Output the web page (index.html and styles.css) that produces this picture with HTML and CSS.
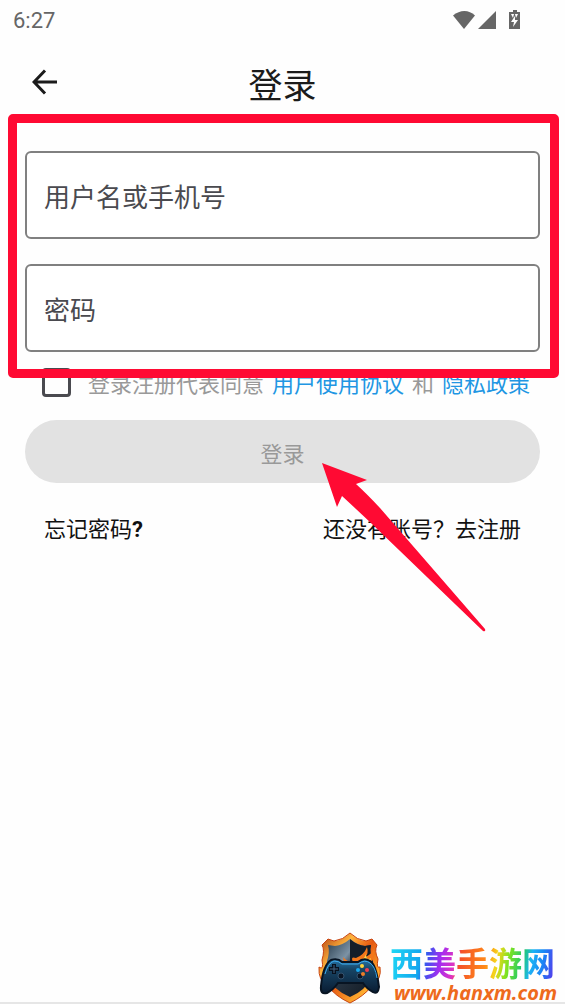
FILE: index.html
```html
<!DOCTYPE html>
<html lang="zh-CN">
  <head>
    <meta charset="UTF-8" />
    <meta name="viewport" content="width=device-width, initial-scale=1.0" />
    <title>登录</title>
    <link rel="stylesheet" href="styles.css">
  </head>
  <body>
    <div class="status-bar">
      <span class="time">6:27</span>
      <svg width="72" height="24" viewBox="0 -3 72 24" fill="#666">
        <path d="M0 4.500C7-1.500 16-1.500 22 4.500L11 18z" />
        <path d="M43 0v18H25z" />
        <path d="M57 1h3v-2h4v2h3v17H56V1z" />
        <path fill="#fff" d="M58 3h3l-1 4zM65 3h-3l1 4zM62 5l-4 6h3l-1 5 5-7h-3z" />
      </svg>
    </div>

    <header class="header">
      <button class="back" type="button" aria-label="返回">
        <svg width="26" height="26" viewBox="0 0 26 26" fill="none" stroke="#1b1b1b" stroke-width="3">
          <path d="M13 1.500L2 13l11 11.500M2 13h23" />
        </svg>
      </button>
      <h1>登录</h1>
    </header>

    <form class="login">
      <div class="fields">
        <input type="text" name="username" placeholder="用户名或手机号" aria-label="用户名或手机号" />
        <input type="password" name="password" placeholder="密码" aria-label="密码" />
      </div>

      <div class="agree">
        <input type="checkbox" id="agree" />
        <label for="agree">登录注册代表同意</label>
        <a href="#">用户使用协议</a>
        <span>和</span>
        <a href="#">隐私政策</a>
      </div>

      <button class="submit" type="submit" disabled>登录</button>

      <div class="links">
        <a href="#">忘记密码<b>?</b></a>
        <a href="#">还没有账号？去注册</a>
      </div>

      <!-- red marks over the form -->
      <div class="mark-box"></div>
      <svg class="mark-arrow" width="164" height="170" viewBox="0 0 164 170">
        <path fill="#ff0a33" d="M0 0L45 17L34 21Q45 31 58 45L163 166Q164 169 161 168L50 61Q33 45 20 33L15 44z" />
      </svg>
    </form>

    <footer class="watermark">
      <svg width="64" height="72" viewBox="0 0 64 72">
        <defs>
          <linearGradient id="rim" x1="0" y1="0" x2="1" y2="1">
            <stop offset="0" stop-color="#a83510" />
            <stop offset=".3" stop-color="#ffb43c" />
            <stop offset=".5" stop-color="#e65a12" />
            <stop offset=".8" stop-color="#ffb030" />
            <stop offset="1" stop-color="#d93a12" />
          </linearGradient>
          <linearGradient id="steel" x1="0" y1="0" x2="1" y2="1">
            <stop offset="0" stop-color="#263b4c" />
            <stop offset=".35" stop-color="#7d93a5" />
            <stop offset=".5" stop-color="#26323f" />
            <stop offset="1" stop-color="#111922" />
          </linearGradient>
          <linearGradient id="pad" x1="0" y1="0" x2="0" y2="1">
            <stop offset="0" stop-color="#2876a8" />
            <stop offset=".3" stop-color="#174464" />
            <stop offset="1" stop-color="#091b31" />
          </linearGradient>
        </defs>
        <path fill="url(#rim)" stroke="#c8430f" stroke-width="1" d="M32 1Q39 8 48 9L54 7L59 13Q56 19 60 27Q58 37 62 35Q64 47 54 54Q46 64 32 71Q17 64 10 54Q0 49 1 35Q6 39 4 28Q7 18 4 13L10 7L16 9Q25 8 32 1z" />
        <path fill="url(#steel)" d="M32 7Q39 13 47 14L53 13Q51 20 55 29V44Q47 59 32 65Q15 58 9 44V29Q12 20 10 13L17 14Q25 13 32 7z" />
        <path fill="#151e29" d="M32 7Q39 13 47 14L53 13Q51 20 55 29H32z" />
        <path fill="#f4771a" d="M20 34Q20 27 26 30L25 25Q30 31 35 30Q32 24 38 26Q46 23 49 15Q51 22 47 25Q53 23 56 17Q57 26 53 31L56 39H20z" />
        <path fill="#ffd34a" d="M36 32Q46 29 48 22Q48 29 53 26Q51 34 46 38H36z" />
        <path fill="url(#pad)" stroke="#081422" stroke-width="2" d="M13 28Q20 26 24 30H40Q46 25 52 29Q58 32 61 55Q60 63 55 60Q49 57 45 51H20Q15 58 9 61Q2 63 3 54Q5 33 13 28z" />
        <path fill="none" stroke="#3cadf0" stroke-width="1" d="M7 42Q10 31 16 29Q21 29 24 32H40Q47 27 52 31Q57 34 59 46" />
        <path stroke="#07111e" stroke-width="4" d="M16 32v10M11 37h10" />
        <path stroke="#466581" stroke-width="1" d="M16 33v8M12 37h8" />
        <g fill="#0a1524" stroke="#35536f">
          <circle cx="23" cy="44" r="3" />
          <circle cx="42" cy="44" r="3" />
        </g>
        <circle cx="40" cy="38" r="2" fill="#19a8ef" />
        <circle cx="44" cy="34" r="2" fill="#ffd23b" />
        <circle cx="49" cy="38" r="2" fill="#f13d4f" />
        <circle cx="45" cy="42" r="2" fill="#ed7d28" />
      </svg>
      <div class="site">
        <p class="site-name">西美手游网</p>
        <p class="site-url">www.hanxm.com</p>
      </div>
    </footer>
  </body>
</html>
```
FILE: styles.css
```css
* {
  margin: 0;
  padding: 0;
  box-sizing: border-box;
  font-family: "Noto Sans CJK SC", sans-serif;
}

body {
  min-height: 100vh;
  display: flex;
  flex-direction: column;
  background: #fefefe;
  box-shadow: inset 0 -2px #e6e6e6;
}
a {
  color: #2196e3;
  text-decoration: none;
}

.status-bar {
  display: flex;
  align-items: center;
  justify-content: space-between;
  height: 40px;
  padding: 0 40px 0 13px;
}
.time {
  font-family: Roboto, sans-serif;
  font-size: 22px;
  color: #666;
}

.header {
  display: grid;
  grid-template-columns: 58px 1fr 58px;
  align-items: center;
  height: 84px;
}
.header h1 {
  padding-top: 4px;
  font-size: 34px;
  font-weight: 400;
  line-height: 48px;
  text-align: center;
  color: #1b1b1b;
}
.back {
  display: flex;
  justify-content: flex-end;
  border: 0;
  background: none;
  cursor: pointer;
}

.login {
  position: relative;
  padding: 27px 25px 0;
}
.fields {
  display: flex;
  flex-direction: column;
  gap: 25px;
}
.fields input {
  width: 100%;
  height: 88px;
  padding: 0 17px;
  border: 2px solid #808080;
  border-radius: 6px;
  outline: 0;
  background: #fff;
  color: #222;
  font-size: 26px;
}
.fields input::placeholder {
  color: #4a4a4f;
}

.agree {
  display: flex;
  align-items: center;
  gap: 8px;
  height: 32px;
  margin-top: 14px;
  padding-left: 17px;
  font-size: 22px;
  white-space: nowrap;
  color: #999;
}
.agree input {
  appearance: none;
  flex: none;
  width: 29px;
  height: 29px;
  margin-right: 9px;
  border: 3px solid #4a4a4f;
  border-radius: 4px;
}

.submit {
  display: block;
  width: 100%;
  height: 63px;
  margin-top: 22px;
  border: 0;
  border-radius: 32px;
  background: #e2e2e2;
  color: #999;
  font-size: 22px;
}

.links {
  display: flex;
  justify-content: space-between;
  margin-top: 28px;
  padding: 0 19px;
  font-size: 22px;
  line-height: 32px;
}
.links a {
  color: #111;
}
.links b {
  font-family: Roboto, sans-serif;
}

.mark-box {
  position: absolute;
  top: -10px;
  left: 8px;
  right: 6px;
  height: 264px;
  border: 9px solid #ff0a33;
  border-radius: 5px;
  pointer-events: none;
}
.mark-arrow {
  position: absolute;
  top: 339px;
  left: 57%;
  pointer-events: none;
}

/* site mark in the bottom corner */
.watermark {
  display: flex;
  justify-content: flex-end;
  gap: 8px;
  height: 72px;
  margin-top: auto;
  padding-right: 8px;
}
.site-name {
  margin-top: 10px;
  font-size: 33px;
  font-weight: 700;
  line-height: 40px;
  background: linear-gradient(100deg, #1fdcf5 0%, #12a5ee 19%, #3c54ee 23%, #a52df0 31%, #e033c0 39%, #f4512a 42%, #ff8a18 57%, #f5d51c 63%, #7ee321 70%, #22c96a 78%, #1cb4f4 83%, #1b83f5 90%, #6a1fe8 100%);
  -webkit-background-clip: text;
  background-clip: text;
  color: transparent;
}
.site-url {
  padding-left: 4px;
  font-family: "Open Sans", sans-serif;
  font-size: 20px;
  font-style: italic;
  font-weight: 700;
  line-height: 22px;
  color: #ee6a1c;
}
```
